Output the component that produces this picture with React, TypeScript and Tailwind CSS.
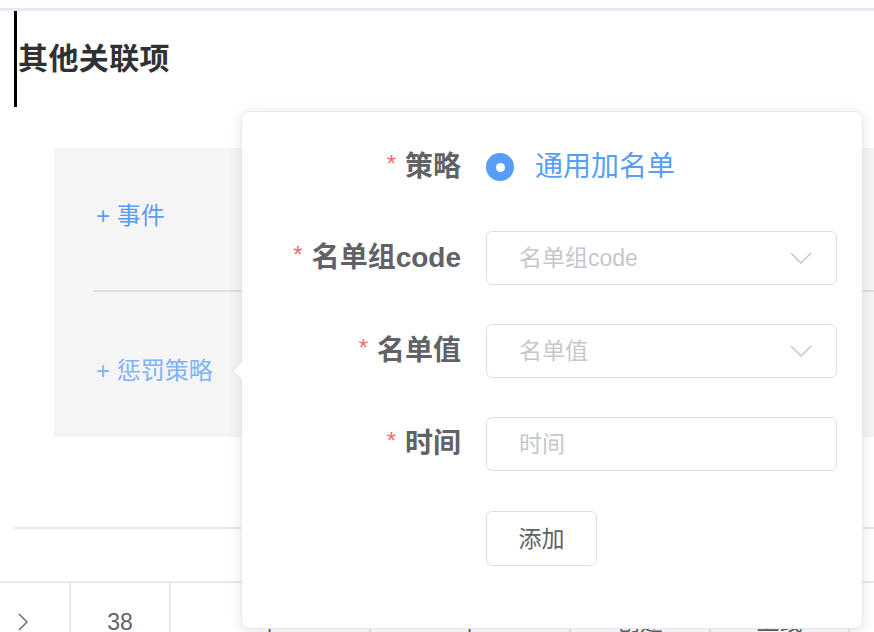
import React from 'react';

const FONT = { fontFamily: '"Liberation Sans", "Noto Sans CJK SC", sans-serif' };

const Chevron: React.FC = () => (
  <svg width="22" height="12" viewBox="0 0 22 12" fill="none">
    <path d="M1 1 L11 11 L21 1" stroke="#c0c4cc" strokeWidth="1.4" />
  </svg>
);

const FormRow: React.FC<{ label: string; className?: string; children: React.ReactNode }> = ({ label, className = '', children }) => (
  <div className={`flex items-center h-[54px] ${className}`}>
    <div className="w-[219px] flex justify-end items-center text-[28px] font-bold text-[#606266] leading-none">
      <span className="text-[#f56c6c] text-[24px] font-normal mr-[9px] -mt-[6px]">*</span>
      {label}
    </div>
    <div className="ml-[25px] w-[351px]">{children}</div>
  </div>
);

const SelectBox: React.FC<{ placeholder: string; arrow?: boolean }> = ({ placeholder, arrow }) => (
  <div className="h-[54px] border border-[#dcdfe6] rounded-[6px] flex items-center justify-between pl-[32px] pr-[24px]">
    <span className="text-[23px] text-[#c4c7ce]">{placeholder}</span>
    {arrow && <Chevron />}
  </div>
);

const App: React.FC = () => {
  const cells = [
    { w: 'w-[69px]', text: '' },
    { w: 'w-[100px]', text: '38' },
    { w: 'w-[200px]', text: '卡' },
    { w: 'w-[200px]', text: '卡' },
    { w: 'w-[140px]', text: '创建' },
    { w: 'w-[139px]', text: '上线' },
  ];

  return (
    <div className="relative w-[874px] h-[632px] overflow-hidden bg-white" style={FONT}>
      <div className="mt-[8px] h-[3px] bg-[#e6eaf2]" />

      {/* section title */}
      <div className="ml-[14px] h-[96px] border-l-[3px] border-black flex items-center pl-[1px]">
        <h2 className="text-[30px] font-bold text-[#303133] leading-none tracking-[0.4px]">其他关联项</h2>
      </div>

      {/* related items panel */}
      <div className="mt-[41px] ml-[54px] h-[289px] bg-[#f5f5f6] pl-[40px]">
        <div className="h-[144px] flex items-center pb-[7px] border-b-2 border-[#dcdde0]">
          <span className="text-[24px] text-[#5a9cf8] pl-[2px]">+ 事件</span>
        </div>
        <div className="h-[145px] flex items-center pt-[13px]">
          <span className="text-[24px] text-[#7fb2f7] pl-[2px]">+ 惩罚策略</span>
        </div>
      </div>

      <div className="mt-[90px] ml-[14px] h-[2px] bg-[#e6e9f0]" />

      {/* table row */}
      <div className="mt-[52px] border-t-2 border-[#e6e9f0] flex h-[60px]">
        {cells.map((c, i) => (
          <div
            key={i}
            className={`${c.w} shrink-0 flex items-center ${i === 0 ? 'pl-[17px]' : 'justify-center border-l-2 border-[#e6e9f0]'} pt-[20px] text-[23px] text-[#606266]`}
          >
            {i === 0 ? (
              <svg width="12" height="20" viewBox="0 0 12 20" fill="none">
                <path d="M2 2 L10 10 L2 18" stroke="#606266" strokeWidth="1.4" />
              </svg>
            ) : (
              c.text
            )}
          </div>
        ))}
        <div className="flex-1 border-l-2 border-[#e6e9f0]" />
      </div>

      {/* popover */}
      <div className="absolute left-[241px] top-[111px] w-[622px] h-[518px] bg-white border border-[#e4e8f2] rounded-[8px] shadow-[0_2px_14px_0_rgba(0,0,0,0.1)]">
        <div className="absolute -left-[7px] top-[252px] w-[13px] h-[13px] bg-white border-l border-b border-[#e4e8f2] rotate-45" />
        <div className="relative flex flex-col gap-[39px] pt-[26px]">
          <FormRow label="策略" className="pt-[4px]">
            <div className="flex items-center">
              <span className="w-[28px] h-[28px] rounded-full bg-[#589ef8] flex items-center justify-center">
                <span className="w-[9px] h-[9px] rounded-full bg-white" />
              </span>
              <span className="ml-[21px] text-[28px] text-[#589ef8] leading-none">通用加名单</span>
            </div>
          </FormRow>
          <FormRow label="名单组code">
            <SelectBox placeholder="名单组code" arrow />
          </FormRow>
          <FormRow label="名单值">
            <SelectBox placeholder="名单值" arrow />
          </FormRow>
          <FormRow label="时间">
            <SelectBox placeholder="时间" />
          </FormRow>
          <div className="flex">
            <div className="ml-[244px] w-[111px] h-[55px] border border-[#dcdfe6] rounded-[6px] flex items-center justify-center text-[23px] text-[#606266] pt-[2px] mt-[1px]">
              添加
            </div>
          </div>
        </div>
      </div>
    </div>
  );
};

export default App;
